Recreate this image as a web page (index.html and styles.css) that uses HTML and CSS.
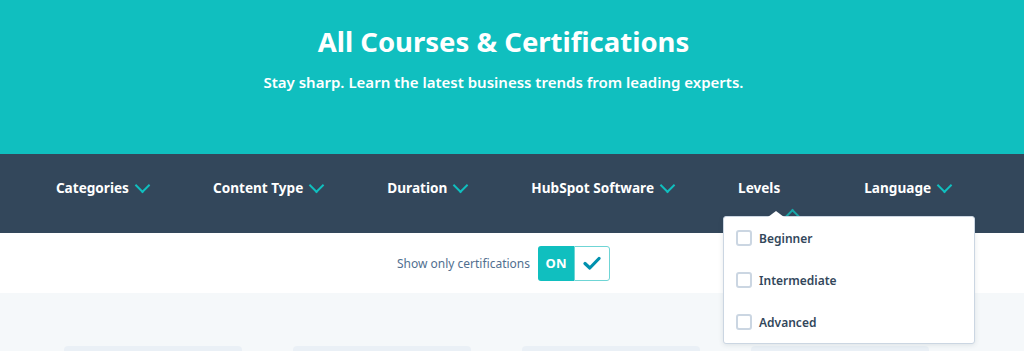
FILE: index.html
```html
<!DOCTYPE html>
<html lang="en">
<head>
    <meta charset="UTF-8">
    <meta name="viewport" content="width=device-width, initial-scale=1.0">
    <title>All Courses & Certifications</title>
    <link rel="stylesheet" href="styles.css">
</head>
<body>
    <header class="hero">
        <h1 class="hero-title">All Courses &amp; Certifications</h1>
        <p class="hero-sub">Stay sharp. Learn the latest business trends from leading experts.</p>
    </header>

    <nav class="filter-bar">
        <div class="filter">Categories <span class="chev"></span></div>
        <div class="filter">Content Type <span class="chev"></span></div>
        <div class="filter">Duration <span class="chev"></span></div>
        <div class="filter">HubSpot Software <span class="chev"></span></div>
        <div class="filter open">Levels <span class="chev up"></span>
            <div class="dropdown">
                <label class="option"><span class="box"></span>Beginner</label>
                <label class="option"><span class="box"></span>Intermediate</label>
                <label class="option"><span class="box"></span>Advanced</label>
            </div>
        </div>
        <div class="filter">Language <span class="chev"></span></div>
    </nav>

    <div class="cert-row">
        <span class="cert-label">Show only certifications</span>
        <div class="toggle">
            <span class="toggle-on">ON</span>
            <span class="toggle-check">
                <svg width="18" height="14" viewBox="0 0 18 14"><path d="M2 7.5 L6.8 12 L16 2.5" fill="none" stroke="#0091ae" stroke-width="3.2" stroke-linecap="round" stroke-linejoin="round"/></svg>
            </span>
        </div>
    </div>

    <main class="courses">
        <div class="card"></div>
        <div class="card"></div>
        <div class="card"></div>
        <div class="card"></div>
    </main>
</body>
</html>
```

FILE: styles.css
```css
* {
    margin: 0;
    padding: 0;
    box-sizing: border-box;
}

body {
    font-family: 'Noto Sans', 'Lato', sans-serif;
    background: #f5f8fa;
    height: 351px;
    overflow: hidden;
}

/* content is centred as if a 17px scrollbar sat on the right */
.hero {
    background: #10bfbf;
    height: 154px;
    color: white;
    text-align: center;
    padding: 24px 17px 0 0;
}

.hero-title {
    font-size: 27.5px;
    font-weight: 700;
    line-height: 36px;
}

.hero-sub {
    margin-top: 12px;
    font-size: 15px;
    font-weight: 600;
    line-height: 20px;
}

.filter-bar {
    background: #33475b;
    height: 79px;
    display: flex;
    justify-content: center;
    align-items: center;
    gap: 64px;
    padding: 0 17px 12px 0;
}

.filter {
    position: relative;
    color: white;
    font-size: 13.6px;
    font-weight: 700;
    display: flex;
    align-items: center;
    gap: 6px;
}

.chev {
    width: 14px;
    height: 14px;
    display: inline-block;
    position: relative;
}

.chev::before {
    content: '';
    position: absolute;
    left: 2px;
    top: -1px;
    width: 9px;
    height: 9px;
    border-right: 2px solid #10bfbf;
    border-bottom: 2px solid #10bfbf;
    transform: rotate(45deg);
}

.chev.up::before {
    top: 30px;
    left: 1px;
    transform: rotate(-135deg);
    border-color: #1aa6a8;
}

.dropdown {
    position: absolute;
    top: 38px;
    left: -15px;
    width: 252px;
    height: 128px;
    background: white;
    border: 1px solid #cbd6e2;
    border-radius: 3px;
    box-shadow: 0 1px 5px rgba(45, 62, 80, 0.12);
    padding: 13px 0 0 12px;
    z-index: 2;
}

.dropdown::before {
    content: '';
    position: absolute;
    top: -6px;
    left: 44px;
    border-left: 8px solid transparent;
    border-right: 8px solid transparent;
    border-bottom: 6px solid white;
}

.option {
    display: flex;
    align-items: center;
    height: 16px;
    margin-bottom: 26px;
    color: #33475b;
    font-size: 12px;
    font-weight: 600;
}

.box {
    width: 16px;
    height: 16px;
    border: 2px solid #cbd6e2;
    border-radius: 3px;
    margin-right: 7px;
    background: white;
}

.cert-row {
    background: white;
    height: 60px;
    display: flex;
    justify-content: center;
    align-items: center;
    gap: 8px;
    padding-right: 17px;
}

.cert-label {
    color: #516f90;
    font-size: 12px;
}

.toggle {
    display: flex;
    height: 35px;
}

.toggle-on {
    width: 36px;
    background: #10bfbf;
    color: white;
    font-size: 13px;
    font-weight: 700;
    display: flex;
    align-items: center;
    justify-content: center;
    border-radius: 3px 0 0 3px;
}

.toggle-check {
    width: 36px;
    border: 1px solid #6fd5d5;
    border-radius: 0 3px 3px 0;
    background: white;
    display: flex;
    align-items: center;
    justify-content: center;
}

.courses {
    display: flex;
    gap: 51px;
    padding: 53px 0 0 64px;
}

.card {
    width: 178px;
    height: 120px;
    background: #eaf0f6;
    border-radius: 4px;
}
```
